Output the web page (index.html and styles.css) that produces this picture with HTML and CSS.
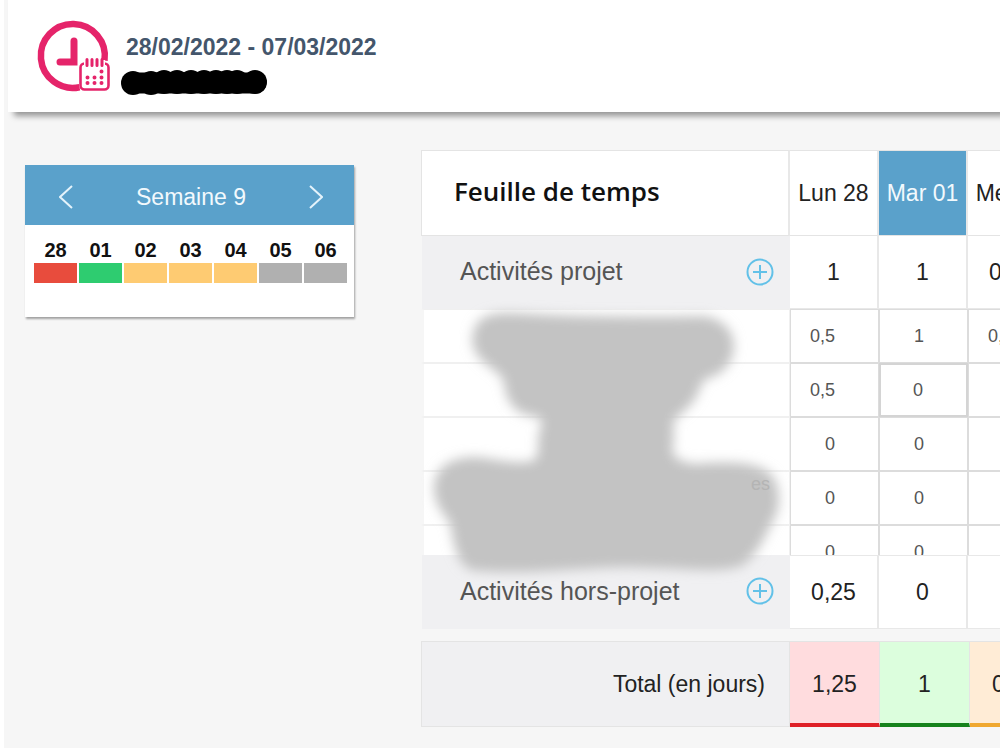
FILE: index.html
```html
<!DOCTYPE html>
<html lang="fr">
<head>
  <meta charset="UTF-8" />
  <meta name="viewport" content="width=device-width, initial-scale=1.0"/>
  <title>Feuille de temps</title>
  <link rel="stylesheet" href="styles.css">
</head>
<body>
  <div class="page">
    <header class="header">
      <svg class="logo" width="76" height="74" viewBox="0 0 76 74" fill="none" stroke="#e5246a">
        <path d="M68.500 40.500A32 32 0 1 0 43.500 67.200" stroke-width="6.500"/>
        <path d="M38 21V42H24" stroke-width="7" stroke-linecap="round"/>
        <rect x="44.500" y="43.500" width="28" height="26" rx="4" stroke-width="2.600" fill="#fff"/>
        <path d="M51 40v7M56 40v7M61 40v7M66 40v7" stroke="#fff" stroke-width="6"/>
        <path d="M51 39.500v6M56 39.500v6M61 39.500v6M66 39.500v6" stroke-width="3" stroke-linecap="round"/>
        <path d="M65.500 51.500h.01M51.500 57.500h.01M58.500 57.500h.01M65.500 57.500h.01M51.500 63h.01M58.500 63h.01M65.500 63h.01" stroke-width="4" stroke-linecap="round"/>
      </svg>
      <div class="header-info">
        <h1>28/02/2022 - 07/03/2022</h1>
        <svg class="redacted" width="148" height="26" viewBox="0 0 148 26">
          <path d="M12 13H135" stroke="#000" stroke-width="21" stroke-linecap="round"/>
          <circle cx="12" cy="13" r="12"/>
          <circle cx="30" cy="13" r="12"/>
          <circle cx="43" cy="12" r="12"/>
          <circle cx="56" cy="12" r="12"/>
          <circle cx="70" cy="12" r="12"/>
          <circle cx="83" cy="12" r="12"/>
          <circle cx="95" cy="12" r="12"/>
          <circle cx="106" cy="12" r="12"/>
          <circle cx="116" cy="12" r="12"/>
          <circle cx="134" cy="12" r="12"/>
        </svg>
      </div>
    </header>

    <main class="content">
      <section class="week">
        <div class="week-nav">
          <button type="button" aria-label="Semaine précédente">
            <svg width="14" height="24" viewBox="0 0 14 24"><path d="M13 1L1 12L13 23"/></svg>
          </button>
          <span>Semaine 9</span>
          <button type="button" aria-label="Semaine suivante">
            <svg width="14" height="24" viewBox="0 0 14 24"><path d="M1 1L13 12L1 23"/></svg>
          </button>
        </div>
        <div class="week-days">
          <div class="day red">28</div>
          <div class="day green">01</div>
          <div class="day orange">02</div>
          <div class="day orange">03</div>
          <div class="day orange">04</div>
          <div class="day off">05</div>
          <div class="day off">06</div>
        </div>
      </section>

      <section class="timesheet">
        <table class="main-table">
          <colgroup><col class="col-label"><col class="col-day"><col class="col-day"><col class="col-day"></colgroup>
          <thead>
            <tr>
              <th class="title" scope="col">Feuille de temps</th>
              <th scope="col">Lun 28</th>
              <th class="today" scope="col">Mar 01</th>
              <th scope="col">Mer 02</th>
            </tr>
          </thead>
          <tbody>
            <tr>
              <th class="group" scope="row">
                <div class="group-label">
                  Activités projet
                  <button type="button" class="add" aria-label="Ajouter une activité projet">
                    <svg width="28" height="28" viewBox="0 0 28 28"><circle cx="14" cy="14" r="12.500"/><path d="M14 7v14M7 14h14"/></svg>
                  </button>
                </div>
              </th>
              <td>1</td>
              <td>1</td>
              <td>0,25</td>
            </tr>
          </tbody>
        </table>

        <div class="projects">
          <table class="project-table">
            <colgroup><col class="col-label"><col class="col-day"><col class="col-day"><col class="col-day"></colgroup>
            <tbody>
              <tr>
                <td class="name"></td>
                <td><input type="text" value="0,5" aria-label="Projet 1, lundi"></td>
                <td><input type="text" value="1" aria-label="Projet 1, mardi"></td>
                <td><input type="text" value="0,5" aria-label="Projet 1, mercredi"></td>
              </tr>
              <tr>
                <td class="name"></td>
                <td><input type="text" value="0,5" aria-label="Projet 2, lundi"></td>
                <td class="active"><input type="text" value="0" aria-label="Projet 2, mardi"></td>
                <td><input type="text" aria-label="Projet 2, mercredi"></td>
              </tr>
              <tr>
                <td class="name"></td>
                <td><input type="text" value="0" aria-label="Projet 3, lundi"></td>
                <td><input type="text" value="0" aria-label="Projet 3, mardi"></td>
                <td><input type="text" aria-label="Projet 3, mercredi"></td>
              </tr>
              <tr>
                <td class="name"></td>
                <td><input type="text" value="0" aria-label="Projet 4, lundi"></td>
                <td><input type="text" value="0" aria-label="Projet 4, mardi"></td>
                <td><input type="text" aria-label="Projet 4, mercredi"></td>
              </tr>
              <tr>
                <td class="name"></td>
                <td><input type="text" value="0" aria-label="Projet 5, lundi"></td>
                <td><input type="text" value="0" aria-label="Projet 5, mardi"></td>
                <td><input type="text" aria-label="Projet 5, mercredi"></td>
              </tr>
            </tbody>
          </table>
        </div>

        <table class="main-table off-project">
          <colgroup><col class="col-label"><col class="col-day"><col class="col-day"><col class="col-day"></colgroup>
          <tbody>
            <tr>
              <th class="group" scope="row">
                <div class="group-label">
                  Activités hors-projet
                  <button type="button" class="add" aria-label="Ajouter une activité hors-projet">
                    <svg width="28" height="28" viewBox="0 0 28 28"><circle cx="14" cy="14" r="12.500"/><path d="M14 7v14M7 14h14"/></svg>
                  </button>
                </div>
              </th>
              <td>0,25</td>
              <td>0</td>
              <td></td>
            </tr>
          </tbody>
        </table>

        <table class="total-table">
          <colgroup><col class="col-label"><col class="col-total"><col class="col-total"><col class="col-total"></colgroup>
          <tbody>
            <tr>
              <th scope="row">Total (en jours)</th>
              <td class="over">1,25</td>
              <td class="full">1</td>
              <td class="partial">0,25</td>
            </tr>
          </tbody>
        </table>

        <!-- project names are masked -->
        <svg class="mask" width="368" height="290" viewBox="0 0 368 290">
          <defs><filter id="soft" x="-10%" y="-10%" width="120%" height="120%"><feGaussianBlur stdDeviation="6"/></filter></defs>
          <path filter="url(#soft)" fill="#c3c3c3" stroke="#c3c3c3" stroke-width="4" d="M56 28C60 16 76 14 94 15C160 19 230 19 282 18C300 20 311 32 311 46C311 62 299 74 284 77C276 82 278 92 270 101C262 111 252 116 250 122C251 132 251 143 249 152C252 160 262 165 275 166C300 164 335 162 349 176C358 188 358 208 350 220C342 236 336 252 320 264C300 272 260 266 230 266C200 264 180 266 160 267C120 270 80 272 50 268C36 260 34 240 31 222C22 212 14 200 15 186C16 168 32 159 55 159C75 161 95 167 112 163C124 156 116 142 121 129C128 120 118 114 106 113C92 109 86 96 85 82C82 70 66 66 58 54C52 45 52 36 56 28Z"/>
          <text class="mask-trace" x="330" y="190">es</text>
        </svg>
      </section>
    </main>
  </div>
</body>
</html>
```
FILE: styles.css
```css
* {
  box-sizing: border-box;
}
body {
  margin: 0;
  background-color: #fff;
  font-family: "Liberation Sans", Arial, sans-serif;
  color: #222;
}
button {
  padding: 0;
  border: none;
  background: none;
  cursor: pointer;
}
svg {
  display: block;
}
.page {
  min-height: calc(100vh - 2px);
  margin: 0 0 2px 4px;
  background-color: #f6f6f6;
  overflow: hidden;
}

/* header */
.header {
  display: flex;
  gap: 14px;
  height: 112px;
  margin-left: 4px;
  padding: 20px 28px 0;
  background-color: #fff;
  box-shadow: 6px 4px 6px rgba(0, 0, 0, 0.4);
}
.header-info {
  padding-top: 14px;
}
.header h1 {
  margin: 0 0 10px;
  font-size: 23px;
  line-height: 26px;
  color: #44566c;
}
.redacted {
  margin-left: -5px;
}

.content {
  display: flex;
  align-items: flex-start;
  gap: 67px;
  padding: 38px 0 20px 21px;
}

/* week picker */
.week {
  flex: 0 0 329px;
  margin-top: 15px;
  padding-bottom: 34px;
  background-color: #fff;
  box-shadow: 1px 2px 2px rgba(0, 0, 0, 0.35);
}
.week-nav {
  display: flex;
  align-items: center;
  justify-content: space-between;
  height: 60px;
  padding: 4px 31px 0 34px;
  background-color: #5aa1cb;
  color: #f2f9fd;
  font-size: 23px;
}
.week-nav path {
  fill: none;
  stroke: #e4f3fb;
  stroke-width: 2;
}
.week-days {
  display: grid;
  grid-template-columns: repeat(7, 1fr);
  gap: 2px;
  padding: 12px 7px 0 9px;
}
.day {
  border-bottom: 20px solid;
  font-size: 20px;
  font-weight: bold;
  line-height: 26px;
  text-align: center;
  color: #111;
}
.red {
  border-color: #e84c3d;
}
.green {
  border-color: #2ecc70;
}
.orange {
  border-color: #fecb72;
}
.off {
  border-color: #b0b0b0;
}

/* timesheet */
.timesheet {
  position: relative;
  flex: 1;
  min-width: 0;
  overflow: hidden;
}
table {
  table-layout: fixed;
  width: 636px;
  border-collapse: separate;
  border-spacing: 0;
}
.col-label {
  width: 369px;
}
.col-day {
  width: 89px;
}
th, td {
  padding: 0;
  font-size: 23px;
  font-weight: normal;
  text-align: center;
}
.main-table th, .main-table td {
  height: 73px;
  border-right: 2px solid #e8e8e8;
  border-bottom: 1px solid #e8e8e8;
  background-color: #fff;
}
.main-table thead th {
  height: 86px;
  border-top: 1px solid #e4e4e4;
  border-bottom-color: #e4e4e4;
}
.main-table .title {
  padding: 0 0 4px 32px;
  border-left: 1px solid #e4e4e4;
  font-family: "Open Sans", sans-serif;
  font-size: 26px;
  font-weight: 600;
  text-align: left;
  color: #111;
}
.main-table .today {
  background-color: #5aa1cb;
  color: #f2f9fd;
}
.main-table .group {
  padding: 0 16px 2px 38px;
  border: none;
  border-left: 1px solid #f6f6f6;
  background-color: #f0f0f2;
  color: #555;
  font-size: 25px;
}
.group-label {
  display: flex;
  align-items: center;
  justify-content: space-between;
}
.add svg {
  fill: none;
  stroke: #62c1e8;
  stroke-width: 2;
}
.projects {
  height: 246px;
  overflow: hidden;
}
.project-table td {
  height: 54px;
  border: 1px solid #dcdcdc;
  background-color: #fff;
}
.project-table .name {
  border-color: #f0f0f0;
  border-left: 3px solid #f6f6f6;
}
.project-table .active {
  border: 2px solid #d4d4d4;
}
.project-table input {
  display: block;
  width: 100%;
  padding: 0 43px 0 0;
  border: none;
  background: none;
  font-family: inherit;
  font-size: 18px;
  line-height: 26px;
  text-align: right;
  color: #555;
}
.off-project th, .off-project td {
  height: 74px;
}
.off-project td {
  border-top: 1px solid #e8e8e8;
}
.total-table {
  width: 639px;
  margin-top: 12px;
}
.col-total {
  width: 90px;
}
.total-table th, .total-table td {
  height: 86px;
  border: 1px solid #e4e4e4;
  background-color: #f0f0f2;
}
.total-table th {
  padding-right: 24px;
  text-align: right;
}
.total-table td {
  padding-top: 3px;
  border-bottom-width: 4px;
  border-left: none;
}
.total-table .over {
  background-color: #ffdcde;
  border-bottom-color: #df2027;
}
.total-table .full {
  background-color: #dcfedd;
  border-bottom-color: #16831c;
}
.total-table .partial {
  background-color: #ffecd6;
  border-bottom-color: #f0a830;
}
.mask {
  position: absolute;
  top: 150px;
  left: 0;
  pointer-events: none;
}
.mask-trace {
  font-size: 18px;
  fill: #b4b4b4;
}
```
